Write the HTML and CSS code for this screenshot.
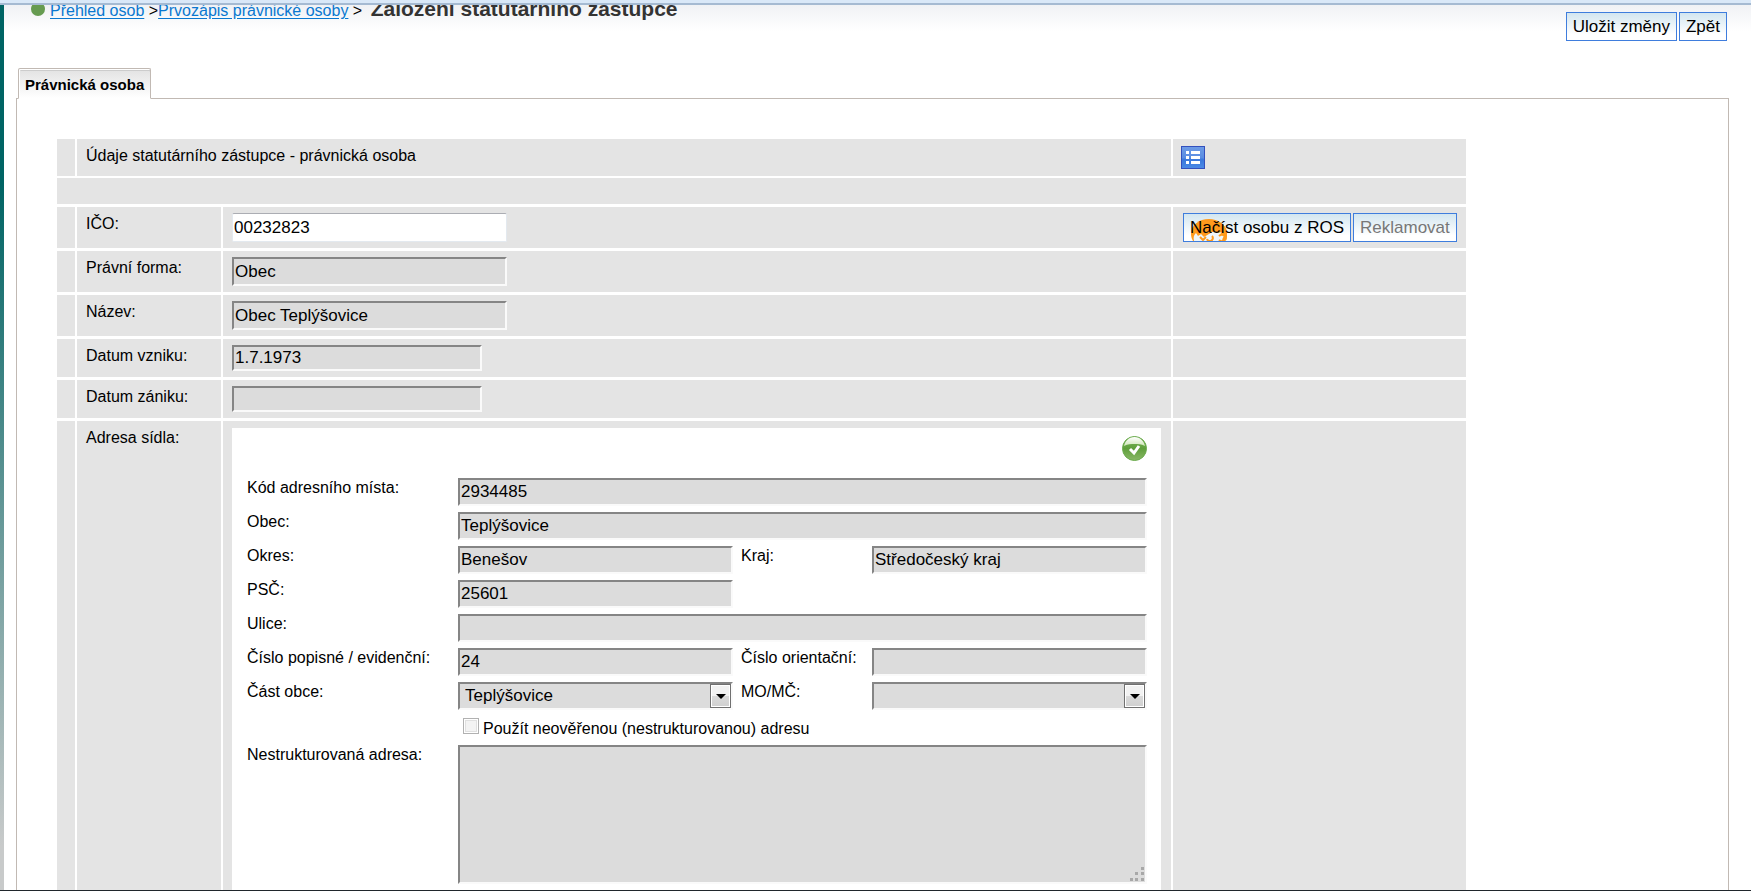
FILE: index.html
```html
<!DOCTYPE html>
<html lang="cs">
<head>
<meta charset="utf-8">
<title>Založení statutárního zástupce</title>
<link rel="stylesheet" href="styles.css">
</head>
<body>
<div class="app">
  <div class="topbar"></div>
  <div class="workspace">
    <div class="side-strip"></div>
    <main class="page">
      <header class="page-head">
        <nav class="breadcrumb">
          <span class="status-dot"></span>
          <div><a href="#">Přehled osob</a> &gt;<a href="#">Prvozápis právnické osoby</a> &gt; <h1 class="title">Založení statutárního zástupce</h1></div>
        </nav>
        <div class="actions">
          <button class="btn" type="button">Uložit změny</button>
          <button class="btn" type="button">Zpět</button>
        </div>
      </header>

      <div class="tabs"><button class="tab" type="button">Právnická osoba</button></div>

      <section class="panel">
        <form class="form">
          <div class="row heading">
            <div class="cell"></div>
            <div class="cell wide">Údaje statutárního zástupce - právnická osoba</div>
            <div class="cell tools">
              <button class="icon-btn" type="button" aria-label="Seznam">
                <svg width="24" height="23" viewBox="0 0 24 23">
                  <defs><linearGradient id="blue" x1="0" y1="0" x2="0" y2="1"><stop offset="0" stop-color="#6d9be6"/><stop offset=".5" stop-color="#5a8de2"/><stop offset=".6" stop-color="#3a78dc"/><stop offset="1" stop-color="#4b8ae6"/></linearGradient></defs>
                  <rect x=".5" y=".5" width="23" height="22" fill="url(#blue)" stroke="#3350bd"/>
                  <path d="M5 5h3v3H5zM10 5h9v3h-9zM5 10h3v3H5zM10 10h9v3h-9zM5 15h3v3H5zM10 15h9v3h-9z" fill="#fff"/>
                </svg>
              </button>
            </div>
          </div>
          <div class="row spacer"><div class="cell"></div></div>
          <div class="row">
            <div class="cell"></div>
            <label class="cell label" for="ico">IČO:</label>
            <div class="cell value"><input class="field medium editable" id="ico" type="text" value="00232823"></div>
            <div class="cell buttons">
              <button class="btn load" type="button">
                <svg class="load-icon" width="36" height="22" viewBox="0 0 36 22">
                  <path d="M0 15C0 6 8 0 18 0c9 0 16 5 18 12v6c-1 2-3 4-5 4H2c-1-2-2-4-2-7z" fill="#ff9a1c"/>
                  <path d="M3 22c-1-4 0-6 2-8l2 3 3-2 3 3 5-3 5-3 4 2 4-1 2 5-2 4z" fill="#eef6fa"/>
                  <path d="M9 18l3 3 3-3M16 20a3 3 0 1 0 5-3M28 17a4 3 0 1 1 0 4M30 14l4 3-2 4" fill="none" stroke="#ff9a1c" stroke-width="2"/>
                </svg>
                <span class="load-text">Načíst osobu z ROS</span>
              </button>
              <button class="btn" type="button" disabled>Reklamovat</button>
            </div>
          </div>
          <div class="row">
            <div class="cell"></div>
            <label class="cell label" for="forma">Právní forma:</label>
            <div class="cell value"><input class="field medium" id="forma" type="text" value="Obec" readonly></div>
            <div class="cell"></div>
          </div>
          <div class="row">
            <div class="cell"></div>
            <label class="cell label" for="nazev">Název:</label>
            <div class="cell value"><input class="field medium" id="nazev" type="text" value="Obec Teplýšovice" readonly></div>
            <div class="cell"></div>
          </div>
          <div class="row">
            <div class="cell"></div>
            <label class="cell label" for="vznik">Datum vzniku:</label>
            <div class="cell value"><input class="field date" id="vznik" type="text" value="1.7.1973" readonly></div>
            <div class="cell"></div>
          </div>
          <div class="row">
            <div class="cell"></div>
            <label class="cell label" for="zanik">Datum zániku:</label>
            <div class="cell value"><input class="field date" id="zanik" type="text" readonly></div>
            <div class="cell"></div>
          </div>
          <div class="row">
            <div class="cell"></div>
            <div class="cell label">Adresa sídla:</div>
            <div class="cell value">
              <div class="address">
                <div class="address-status">
                  <svg width="25" height="25" viewBox="0 0 25 25" role="img" aria-label="Ověřeno">
                    <defs>
                      <linearGradient id="ball" x1="0" y1="0" x2="0" y2="1"><stop offset="0" stop-color="#7db85e"/><stop offset=".5" stop-color="#5f9f3c"/><stop offset="1" stop-color="#8ab866"/></linearGradient>
                      <linearGradient id="gloss" x1="0" y1="0" x2="0" y2="1"><stop offset="0" stop-color="#fff"/><stop offset="1" stop-color="#cfe6b8"/></linearGradient>
                    </defs>
                    <circle cx="12.500" cy="12.500" r="12" fill="url(#ball)" stroke="#6bab4d"/>
                    <path d="M2 10C3 5 7 1 12.500 1S22 5 23 10C19 8 16 8 12.500 8S6 8 2 10z" fill="url(#gloss)"/>
                    <path d="M8 13l4 4 5-7" fill="none" stroke="#fff" stroke-width="3"/>
                  </svg>
                </div>
                <div class="address-grid">
                  <label for="kod">Kód adresního místa:</label>
                  <input class="field span" id="kod" type="text" value="2934485" readonly>
                  <label for="obec">Obec:</label>
                  <input class="field span" id="obec" type="text" value="Teplýšovice" readonly>
                  <label for="okres">Okres:</label>
                  <input class="field" id="okres" type="text" value="Benešov" readonly>
                  <label for="kraj">Kraj:</label>
                  <input class="field" id="kraj" type="text" value="Středočeský kraj" readonly>
                  <label for="psc">PSČ:</label>
                  <input class="field first" id="psc" type="text" value="25601" readonly>
                  <label class="start" for="ulice">Ulice:</label>
                  <input class="field span" id="ulice" type="text" readonly>
                  <label for="cp">Číslo popisné / evidenční:</label>
                  <input class="field" id="cp" type="text" value="24" readonly>
                  <label for="co">Číslo orientační:</label>
                  <input class="field" id="co" type="text" readonly>
                  <label for="cast">Část obce:</label>
                  <div class="select-wrap">
                    <select class="field select" id="cast"><option>Teplýšovice</option></select>
                    <span class="arrow"><svg width="10" height="5" viewBox="0 0 10 5"><path d="M0 0h10L5 5z"/></svg></span>
                  </div>
                  <label for="mo">MO/MČ:</label>
                  <div class="select-wrap">
                    <select class="field select" id="mo"><option></option></select>
                    <span class="arrow"><svg width="10" height="5" viewBox="0 0 10 5"><path d="M0 0h10L5 5z"/></svg></span>
                  </div>
                  <div class="check">
                    <input class="checkbox" id="neover" type="checkbox" disabled>
                    <label class="check-label" for="neover">Použít neověřenou (nestrukturovanou) adresu</label>
                  </div>
                  <label for="nestr">Nestrukturovaná adresa:</label>
                  <div class="area-wrap span">
                    <textarea class="field area" id="nestr" readonly></textarea>
                    <svg class="grip" width="16" height="16" viewBox="0 0 16 16"><path d="M12 1h3v3h-3zM6 6h3v3H6zM12 6h3v3h-3zM1 12h3v3H1zM6 12h3v3H6zM12 12h3v3h-3z"/></svg>
                  </div>
                </div>
              </div>
            </div>
            <div class="cell"></div>
          </div>
        </form>
      </section>
    </main>
  </div>
  <div class="bottombar"></div>
</div>
</body>
</html>
```
FILE: styles.css
```css
* { box-sizing: border-box; }

body {
  margin: 0;
  background: #fff;
  color: #000;
  font: 16px/18px "Liberation Sans", Arial, sans-serif;
}

.app {
  display: flex;
  flex-direction: column;
  height: 100vh;
  overflow: hidden;
}

.topbar {
  flex: none;
  height: 5px;
  background: #d9e8f8;
  border-bottom: 2px solid #a5bad2;
}

.bottombar { flex: none; height: 1px; background: #20262c; }

.workspace { flex: 1; min-height: 0; display: flex; }

.side-strip {
  flex: none;
  width: 4px;
  background: linear-gradient(#006464 20%, #c8caca 95%);
}

.page {
  flex: 1;
  min-width: 0;
  overflow: auto;
  scrollbar-width: none;
  padding: 0 22px 0 12px;
  background: linear-gradient(#f0f2f5, #fff 26px);
}

.page-head {
  display: flex;
  justify-content: space-between;
  align-items: flex-start;
  height: 63px;
}

.breadcrumb { display: flex; gap: 5px; padding-left: 15px; margin-top: -8px; line-height: 24px; }
.breadcrumb a { color: #0a78d0; text-decoration: underline; text-underline-offset: 2px; }
.status-dot { width: 14px; height: 14px; margin-top: 5px; border-radius: 50%; background: #669b51; }
.title { display: inline; margin: 0 0 0 4px; font-size: 21px; line-height: 24px; color: #333; }

.actions { display: flex; gap: 2px; padding: 7px 2px 0 0; }

.btn {
  position: relative;
  height: 29px;
  padding: 1px 6px 0;
  border: 1px solid #3f7ddd;
  background: linear-gradient(#d3e6f0, #fff 80%);
  color: #000;
  font: 17px/20px "Liberation Sans", Arial, sans-serif;
  white-space: nowrap;
}
.btn:disabled { color: #777; }
.load-icon { position: absolute; left: 7px; top: 5px; }
.load-text { position: relative; }

.tabs { display: flex; padding-left: 2px; }
.tab {
  position: relative;
  height: 31px;
  margin-bottom: -1px;
  padding: 3px 6px 0;
  border: 1px solid #c1b9b3;
  border-bottom-color: #fff;
  border-radius: 2px 2px 0 0;
  background: linear-gradient(#e2e2e2, #fff);
  box-shadow: inset 1px 1px #fff, inset 0 2px #ccc;
  font: bold 15px/18px "Liberation Sans", Arial, sans-serif;
}

.panel { padding: 40px; border: 1px solid #c1b9b3; }

.form {
  display: flex;
  flex-direction: column;
  gap: 3px;
  max-width: 1409px;
}

.row {
  display: grid;
  grid-template-columns: 18px 144px minmax(0, 1fr) 293px;
  gap: 2px;
}
.spacer { grid-template-columns: 1fr; height: 26px; }
.heading { height: 36px; }
.cell { background: #e4e4e4; }
.wide { grid-column: 2 / 4; padding: 8px 9px; }
.label { padding: 8px 9px; }
.value { padding: 6px 10px 6px 9px; display: flex; }
.tools { padding: 7px 8px; }
.icon-btn { display: block; padding: 0; border: 0; background: none; }
.icon-btn svg { display: block; }
.buttons { display: flex; gap: 2px; padding: 6px 10px; }

.field {
  width: 100%;
  min-width: 0;
  height: 28px;
  margin: 0;
  padding: 0 1px;
  border: 2px solid;
  border-color: #858585 #fafafa #fafafa #858585;
  border-radius: 0;
  outline: 0;
  background: #dcdcdc;
  color: #000;
  font: 17px/20px "Liberation Sans", Arial, sans-serif;
}
.medium { width: 275px; height: 29px; }
.date { width: 250px; height: 26px; }
.editable {
  background: #fff;
  border: 1px solid #e3e9ef;
  border-top-color: #abadb3;
  border-radius: 2px;
}

.address { flex: 1; min-width: 0; margin-top: 1px; background: #fff; padding: 8px 14px 30px 15px; }
.address-status { display: flex; justify-content: flex-end; height: 42px; }
.address-grid {
  display: grid;
  grid-template-columns: 203px minmax(0, 1fr) 123px minmax(0, 1fr);
  column-gap: 8px;
  row-gap: 6px;
}
.address-grid > label { padding-top: 1px; }
.span { grid-column: 2 / 5; }
.start { grid-column: 1; }

.select-wrap { position: relative; display: flex; }
.select { appearance: none; padding: 0 24px 0 5px; }
.arrow {
  position: absolute;
  top: 2px;
  right: 2px;
  width: 21px;
  height: 24px;
  display: flex;
  align-items: center;
  justify-content: center;
  border: 1px solid #707070;
  box-shadow: inset 0 0 0 1px #fff;
  background: linear-gradient(#f2f2f2 50%, #dadada 50%, #cfcfcf);
  pointer-events: none;
}

.check { grid-column: 2 / 5; display: flex; gap: 4px; height: 23px; padding: 2px 5px 0; }
.checkbox {
  appearance: none;
  width: 16px;
  height: 16px;
  margin: 0;
  border: 1px solid #b1b1b1;
  background: #f3f3f3;
  box-shadow: inset 0 0 0 1px #fff, inset 0 0 0 2px #e0e0e0;
}
.check-label { padding-top: 2px; }

.area-wrap { position: relative; display: flex; }
.area { height: 139px; resize: none; }
.grip { position: absolute; right: 2px; bottom: 2px; fill: #a8a8a8; }
```
